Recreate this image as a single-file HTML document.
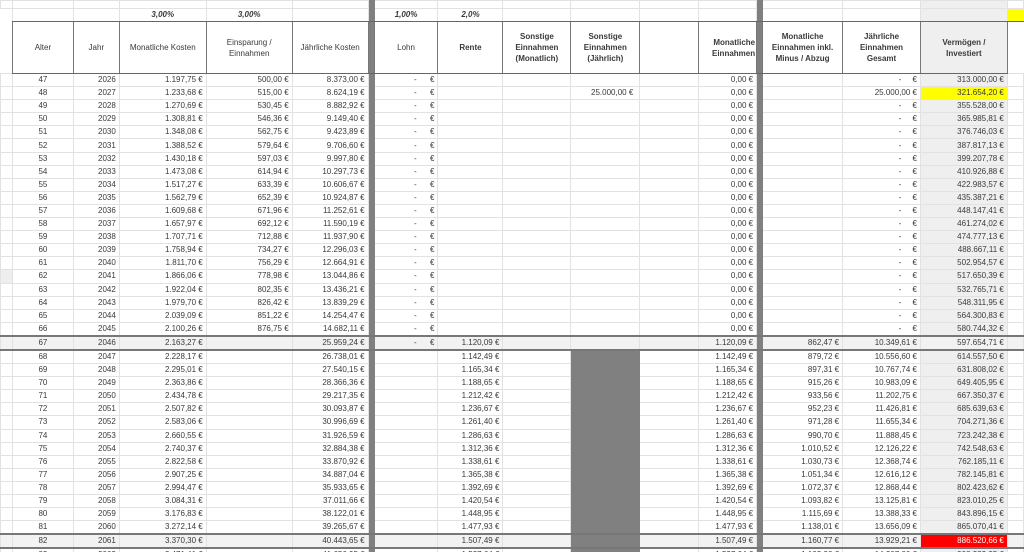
<!DOCTYPE html>
<html><head><meta charset="utf-8"><style>
html,body{margin:0;padding:0;background:#fff;width:1024px;height:552px;overflow:hidden}
table{border-collapse:collapse;table-layout:fixed;font-family:"Liberation Sans",sans-serif;font-size:8px;color:#3a3a3a}
td{border:1px solid #e2e2e2;padding:0 3px 0 0;text-align:right;white-space:nowrap;overflow:hidden;height:12px;line-height:12px}
tr.d td{height:12.1px}
tr.t td{height:7px;line-height:7px;font-size:0}
td.s{background:#808080;border-color:#808080;padding:0}
td.c{text-align:center;padding:0}
td.v{background:#efefef}
td.l{white-space:pre}
td.b{background:#808080;border-color:#808080}
tr.p td{font-weight:bold;font-style:italic;text-align:center;border-top:1px solid #666;border-bottom:1px solid #666;padding:0}
tr.h td{height:51px;text-align:center;line-height:11px;white-space:nowrap;padding:0 1px;border-bottom:1px solid #666;border-left:1px solid #777;border-right:1px solid #777;font-size:8px}
tr.h td.bo{font-weight:bold}
tr.x td{background:#f2f2f2;border-top:2px solid #777;border-bottom:2px solid #777}
tr.x td.s{background:#808080}
tr.x td.red{background:#ff0000;color:#fff}
td.y{background:#ffff00}
td.k{border-left:1px solid #777}
</style></head><body>
<table>
<colgroup><col style="width:12px"><col style="width:61px"><col style="width:46px"><col style="width:87px"><col style="width:86px"><col style="width:76px"><col style="width:6px"><col style="width:64px"><col style="width:65px"><col style="width:68px"><col style="width:69px"><col style="width:59px"><col style="width:58px"><col style="width:6px"><col style="width:80px"><col style="width:78px"><col style="width:87px"><col style="width:16px"></colgroup>
<tr class="t"><td></td><td></td><td></td><td></td><td></td><td></td><td class="s"></td><td></td><td></td><td></td><td></td><td></td><td></td><td class="s"></td><td></td><td></td><td class="v"></td><td></td></tr>
<tr class="p"><td style="border:none"></td><td></td><td></td><td>3,00%</td><td>3,00%</td><td></td><td class="s"></td><td>1,00%</td><td>2,0%</td><td></td><td></td><td></td><td></td><td class="s"></td><td></td><td></td><td class="v"></td><td class="y"></td></tr>
<tr class="h"><td style="border:none"></td><td>Alter</td><td>Jahr</td><td>Monatliche Kosten</td><td>Einsparung /<br>Einnahmen</td><td>Jährliche Kosten</td><td class="s"></td><td>Lohn</td><td class="bo">Rente</td><td class="bo">Sonstige<br>Einnahmen<br>(Monatlich)</td><td class="bo">Sonstige<br>Einnahmen<br>(Jährlich)</td><td></td><td class="bo" style="text-align:right">Monatliche<br>Einnahmen</td><td class="s"></td><td class="bo">Monatliche<br>Einnahmen inkl.<br>Minus / Abzug</td><td class="bo">Jährliche<br>Einnahmen<br>Gesamt</td><td class="bo v">Vermögen /<br>Investiert</td><td style="border:none;border-top:1px solid #666"></td></tr>
<tr class="d"><td></td><td class="c">47</td><td>2026</td><td>1.197,75 €</td><td>500,00 €</td><td>8.373,00 €</td><td class="s"></td><td class="l">-      €</td><td></td><td></td><td></td><td></td><td>0,00 €</td><td class="s"></td><td></td><td class="l">-     €</td><td class="v">313.000,00 €</td><td></td></tr>
<tr class="d"><td></td><td class="c">48</td><td>2027</td><td>1.233,68 €</td><td>515,00 €</td><td>8.624,19 €</td><td class="s"></td><td class="l">-      €</td><td></td><td></td><td style="padding-right:6px">25.000,00 €</td><td></td><td>0,00 €</td><td class="s"></td><td></td><td>25.000,00 €</td><td class="y">321.654,20 €</td><td></td></tr>
<tr class="d"><td></td><td class="c">49</td><td>2028</td><td>1.270,69 €</td><td>530,45 €</td><td>8.882,92 €</td><td class="s"></td><td class="l">-      €</td><td></td><td></td><td></td><td></td><td>0,00 €</td><td class="s"></td><td></td><td class="l">-     €</td><td class="v">355.528,00 €</td><td></td></tr>
<tr class="d"><td></td><td class="c">50</td><td>2029</td><td>1.308,81 €</td><td>546,36 €</td><td>9.149,40 €</td><td class="s"></td><td class="l">-      €</td><td></td><td></td><td></td><td></td><td>0,00 €</td><td class="s"></td><td></td><td class="l">-     €</td><td class="v">365.985,81 €</td><td></td></tr>
<tr class="d"><td></td><td class="c">51</td><td>2030</td><td>1.348,08 €</td><td>562,75 €</td><td>9.423,89 €</td><td class="s"></td><td class="l">-      €</td><td></td><td></td><td></td><td></td><td>0,00 €</td><td class="s"></td><td></td><td class="l">-     €</td><td class="v">376.746,03 €</td><td></td></tr>
<tr class="d"><td></td><td class="c">52</td><td>2031</td><td>1.388,52 €</td><td>579,64 €</td><td>9.706,60 €</td><td class="s"></td><td class="l">-      €</td><td></td><td></td><td></td><td></td><td>0,00 €</td><td class="s"></td><td></td><td class="l">-     €</td><td class="v">387.817,13 €</td><td></td></tr>
<tr class="d"><td></td><td class="c">53</td><td>2032</td><td>1.430,18 €</td><td>597,03 €</td><td>9.997,80 €</td><td class="s"></td><td class="l">-      €</td><td></td><td></td><td></td><td></td><td>0,00 €</td><td class="s"></td><td></td><td class="l">-     €</td><td class="v">399.207,78 €</td><td></td></tr>
<tr class="d"><td></td><td class="c">54</td><td>2033</td><td>1.473,08 €</td><td>614,94 €</td><td>10.297,73 €</td><td class="s"></td><td class="l">-      €</td><td></td><td></td><td></td><td></td><td>0,00 €</td><td class="s"></td><td></td><td class="l">-     €</td><td class="v">410.926,88 €</td><td></td></tr>
<tr class="d"><td></td><td class="c">55</td><td>2034</td><td>1.517,27 €</td><td>633,39 €</td><td>10.606,67 €</td><td class="s"></td><td class="l">-      €</td><td></td><td></td><td></td><td></td><td>0,00 €</td><td class="s"></td><td></td><td class="l">-     €</td><td class="v">422.983,57 €</td><td></td></tr>
<tr class="d"><td></td><td class="c">56</td><td>2035</td><td>1.562,79 €</td><td>652,39 €</td><td>10.924,87 €</td><td class="s"></td><td class="l">-      €</td><td></td><td></td><td></td><td></td><td>0,00 €</td><td class="s"></td><td></td><td class="l">-     €</td><td class="v">435.387,21 €</td><td></td></tr>
<tr class="d"><td></td><td class="c">57</td><td>2036</td><td>1.609,68 €</td><td>671,96 €</td><td>11.252,61 €</td><td class="s"></td><td class="l">-      €</td><td></td><td></td><td></td><td></td><td>0,00 €</td><td class="s"></td><td></td><td class="l">-     €</td><td class="v">448.147,41 €</td><td></td></tr>
<tr class="d"><td></td><td class="c">58</td><td>2037</td><td>1.657,97 €</td><td>692,12 €</td><td>11.590,19 €</td><td class="s"></td><td class="l">-      €</td><td></td><td></td><td></td><td></td><td>0,00 €</td><td class="s"></td><td></td><td class="l">-     €</td><td class="v">461.274,02 €</td><td></td></tr>
<tr class="d"><td></td><td class="c">59</td><td>2038</td><td>1.707,71 €</td><td>712,88 €</td><td>11.937,90 €</td><td class="s"></td><td class="l">-      €</td><td></td><td></td><td></td><td></td><td>0,00 €</td><td class="s"></td><td></td><td class="l">-     €</td><td class="v">474.777,13 €</td><td></td></tr>
<tr class="d"><td></td><td class="c">60</td><td>2039</td><td>1.758,94 €</td><td>734,27 €</td><td>12.296,03 €</td><td class="s"></td><td class="l">-      €</td><td></td><td></td><td></td><td></td><td>0,00 €</td><td class="s"></td><td></td><td class="l">-     €</td><td class="v">488.667,11 €</td><td></td></tr>
<tr class="d"><td></td><td class="c">61</td><td>2040</td><td>1.811,70 €</td><td>756,29 €</td><td>12.664,91 €</td><td class="s"></td><td class="l">-      €</td><td></td><td></td><td></td><td></td><td>0,00 €</td><td class="s"></td><td></td><td class="l">-     €</td><td class="v">502.954,57 €</td><td></td></tr>
<tr class="d"><td style="background:#eee"></td><td class="c">62</td><td>2041</td><td>1.866,06 €</td><td>778,98 €</td><td>13.044,86 €</td><td class="s"></td><td class="l">-      €</td><td></td><td></td><td></td><td></td><td>0,00 €</td><td class="s"></td><td></td><td class="l">-     €</td><td class="v">517.650,39 €</td><td></td></tr>
<tr class="d"><td></td><td class="c">63</td><td>2042</td><td>1.922,04 €</td><td>802,35 €</td><td>13.436,21 €</td><td class="s"></td><td class="l">-      €</td><td></td><td></td><td></td><td></td><td>0,00 €</td><td class="s"></td><td></td><td class="l">-     €</td><td class="v">532.765,71 €</td><td></td></tr>
<tr class="d"><td></td><td class="c">64</td><td>2043</td><td>1.979,70 €</td><td>826,42 €</td><td>13.839,29 €</td><td class="s"></td><td class="l">-      €</td><td></td><td></td><td></td><td></td><td>0,00 €</td><td class="s"></td><td></td><td class="l">-     €</td><td class="v">548.311,95 €</td><td></td></tr>
<tr class="d"><td></td><td class="c">65</td><td>2044</td><td>2.039,09 €</td><td>851,22 €</td><td>14.254,47 €</td><td class="s"></td><td class="l">-      €</td><td></td><td></td><td></td><td></td><td>0,00 €</td><td class="s"></td><td></td><td class="l">-     €</td><td class="v">564.300,83 €</td><td></td></tr>
<tr class="d"><td></td><td class="c">66</td><td>2045</td><td>2.100,26 €</td><td>876,75 €</td><td>14.682,11 €</td><td class="s"></td><td class="l">-      €</td><td></td><td></td><td></td><td></td><td>0,00 €</td><td class="s"></td><td></td><td class="l">-     €</td><td class="v">580.744,32 €</td><td></td></tr>
<tr class="d x"><td></td><td class="c">67</td><td>2046</td><td>2.163,27 €</td><td></td><td>25.959,24 €</td><td class="s"></td><td class="l">-      €</td><td>1.120,09 €</td><td></td><td></td><td></td><td>1.120,09 €</td><td class="s"></td><td>862,47 €</td><td>10.349,61 €</td><td>597.654,71 €</td><td></td></tr>
<tr class="d"><td></td><td class="c">68</td><td>2047</td><td>2.228,17 €</td><td></td><td>26.738,01 €</td><td class="s"></td><td></td><td>1.142,49 €</td><td></td><td class="b"></td><td class="k"></td><td>1.142,49 €</td><td class="s"></td><td>879,72 €</td><td>10.556,60 €</td><td class="v">614.557,50 €</td><td></td></tr>
<tr class="d"><td></td><td class="c">69</td><td>2048</td><td>2.295,01 €</td><td></td><td>27.540,15 €</td><td class="s"></td><td></td><td>1.165,34 €</td><td></td><td class="b"></td><td class="k"></td><td>1.165,34 €</td><td class="s"></td><td>897,31 €</td><td>10.767,74 €</td><td class="v">631.808,02 €</td><td></td></tr>
<tr class="d"><td></td><td class="c">70</td><td>2049</td><td>2.363,86 €</td><td></td><td>28.366,36 €</td><td class="s"></td><td></td><td>1.188,65 €</td><td></td><td class="b"></td><td class="k"></td><td>1.188,65 €</td><td class="s"></td><td>915,26 €</td><td>10.983,09 €</td><td class="v">649.405,95 €</td><td></td></tr>
<tr class="d"><td></td><td class="c">71</td><td>2050</td><td>2.434,78 €</td><td></td><td>29.217,35 €</td><td class="s"></td><td></td><td>1.212,42 €</td><td></td><td class="b"></td><td class="k"></td><td>1.212,42 €</td><td class="s"></td><td>933,56 €</td><td>11.202,75 €</td><td class="v">667.350,37 €</td><td></td></tr>
<tr class="d"><td></td><td class="c">72</td><td>2051</td><td>2.507,82 €</td><td></td><td>30.093,87 €</td><td class="s"></td><td></td><td>1.236,67 €</td><td></td><td class="b"></td><td class="k"></td><td>1.236,67 €</td><td class="s"></td><td>952,23 €</td><td>11.426,81 €</td><td class="v">685.639,63 €</td><td></td></tr>
<tr class="d"><td></td><td class="c">73</td><td>2052</td><td>2.583,06 €</td><td></td><td>30.996,69 €</td><td class="s"></td><td></td><td>1.261,40 €</td><td></td><td class="b"></td><td class="k"></td><td>1.261,40 €</td><td class="s"></td><td>971,28 €</td><td>11.655,34 €</td><td class="v">704.271,36 €</td><td></td></tr>
<tr class="d"><td></td><td class="c">74</td><td>2053</td><td>2.660,55 €</td><td></td><td>31.926,59 €</td><td class="s"></td><td></td><td>1.286,63 €</td><td></td><td class="b"></td><td class="k"></td><td>1.286,63 €</td><td class="s"></td><td>990,70 €</td><td>11.888,45 €</td><td class="v">723.242,38 €</td><td></td></tr>
<tr class="d"><td></td><td class="c">75</td><td>2054</td><td>2.740,37 €</td><td></td><td>32.884,38 €</td><td class="s"></td><td></td><td>1.312,36 €</td><td></td><td class="b"></td><td class="k"></td><td>1.312,36 €</td><td class="s"></td><td>1.010,52 €</td><td>12.126,22 €</td><td class="v">742.548,63 €</td><td></td></tr>
<tr class="d"><td></td><td class="c">76</td><td>2055</td><td>2.822,58 €</td><td></td><td>33.870,92 €</td><td class="s"></td><td></td><td>1.338,61 €</td><td></td><td class="b"></td><td class="k"></td><td>1.338,61 €</td><td class="s"></td><td>1.030,73 €</td><td>12.368,74 €</td><td class="v">762.185,11 €</td><td></td></tr>
<tr class="d"><td></td><td class="c">77</td><td>2056</td><td>2.907,25 €</td><td></td><td>34.887,04 €</td><td class="s"></td><td></td><td>1.365,38 €</td><td></td><td class="b"></td><td class="k"></td><td>1.365,38 €</td><td class="s"></td><td>1.051,34 €</td><td>12.616,12 €</td><td class="v">782.145,81 €</td><td></td></tr>
<tr class="d"><td></td><td class="c">78</td><td>2057</td><td>2.994,47 €</td><td></td><td>35.933,65 €</td><td class="s"></td><td></td><td>1.392,69 €</td><td></td><td class="b"></td><td class="k"></td><td>1.392,69 €</td><td class="s"></td><td>1.072,37 €</td><td>12.868,44 €</td><td class="v">802.423,62 €</td><td></td></tr>
<tr class="d"><td></td><td class="c">79</td><td>2058</td><td>3.084,31 €</td><td></td><td>37.011,66 €</td><td class="s"></td><td></td><td>1.420,54 €</td><td></td><td class="b"></td><td class="k"></td><td>1.420,54 €</td><td class="s"></td><td>1.093,82 €</td><td>13.125,81 €</td><td class="v">823.010,25 €</td><td></td></tr>
<tr class="d"><td></td><td class="c">80</td><td>2059</td><td>3.176,83 €</td><td></td><td>38.122,01 €</td><td class="s"></td><td></td><td>1.448,95 €</td><td></td><td class="b"></td><td class="k"></td><td>1.448,95 €</td><td class="s"></td><td>1.115,69 €</td><td>13.388,33 €</td><td class="v">843.896,15 €</td><td></td></tr>
<tr class="d"><td></td><td class="c">81</td><td>2060</td><td>3.272,14 €</td><td></td><td>39.265,67 €</td><td class="s"></td><td></td><td>1.477,93 €</td><td></td><td class="b"></td><td class="k"></td><td>1.477,93 €</td><td class="s"></td><td>1.138,01 €</td><td>13.656,09 €</td><td class="v">865.070,41 €</td><td></td></tr>
<tr class="d x"><td></td><td class="c">82</td><td>2061</td><td>3.370,30 €</td><td></td><td>40.443,65 €</td><td class="s"></td><td></td><td>1.507,49 €</td><td></td><td class="s"></td><td class="k"></td><td>1.507,49 €</td><td class="s"></td><td>1.160,77 €</td><td>13.929,21 €</td><td class="red">886.520,66 €</td><td></td></tr>
<tr class="d"><td></td><td class="c">83</td><td>2062</td><td>3.471,41 €</td><td></td><td>41.656,95 €</td><td class="s"></td><td></td><td>1.537,64 €</td><td></td><td class="b"></td><td class="k"></td><td>1.537,64 €</td><td class="s"></td><td>1.183,98 €</td><td>14.207,80 €</td><td class="v">908.232,95 €</td><td></td></tr>
</table>
</body></html>
